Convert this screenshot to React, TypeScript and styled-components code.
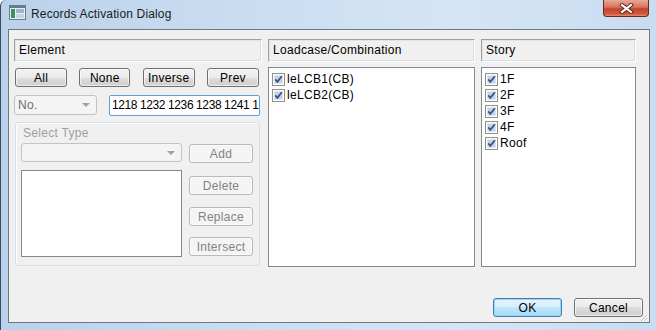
import React from 'react'
import styled, { createGlobalStyle } from 'styled-components'

const GlobalStyle = createGlobalStyle`
  html, body {
    margin: 0;
    padding: 0;
    background: #ffffff;
  }
  body {
    font-family: 'Liberation Sans', Arial, sans-serif;
    font-size: 12px;
    color: #000;
  }
`

const Window = styled.div`
  position: relative;
  width: 656px;
  height: 330px;
  box-sizing: border-box;
  border-left: 1px solid #3d4a5a;
  border-top-left-radius: 6px;
  background: linear-gradient(90deg, #b9d1ea 0%, #c7dbf0 30%, #d5e5f5 70%, #c9dcf0 100%);
  overflow: hidden;
`

const TitleBar = styled.div`
  height: 29px;
  display: flex;
  align-items: flex-start;
  padding-left: 8px;
`

const TitleIcon = styled.svg`
  margin-top: 5px;
  flex: none;
`

const Title = styled.div`
  margin-left: 5px;
  margin-top: 7px;
  font-size: 12px;
  letter-spacing: 0.15px;
  color: #1c1c1c;
  flex: 1;
`

const CloseButton = styled.div`
  width: 46px;
  height: 17px;
  margin-right: 7px;
  box-sizing: border-box;
  border: 1px solid #6b2a20;
  border-top: none;
  border-radius: 0 0 4px 4px;
  background: linear-gradient(#e8a897 0%, #d6735e 45%, #c5432c 55%, #d2563c 85%, #e48b70 100%);
  display: flex;
  align-items: center;
  justify-content: center;
`

const Client = styled.div`
  width: 642px;
  height: 294px;
  margin-left: 7px;
  box-sizing: border-box;
  border: 1px solid #6f7780;
  background: #f0f0f0;
  padding: 9px 6px 5px 5px;
  display: flex;
  flex-direction: column;
`

const Panels = styled.div`
  display: grid;
  grid-template-columns: 248px 207px 155px;
  column-gap: 6px;
  height: 228px;
`

const Column = styled.div`
  display: flex;
  flex-direction: column;
`

const Header = styled.div`
  height: 23px;
  box-sizing: border-box;
  border: 1px solid;
  border-color: #a0a0a0 #ffffff #ffffff #a0a0a0;
  box-shadow: inset 1px 1px 0 #e3e3e3, inset -1px -1px 0 #dcdcdc;
  padding-left: 4px;
  line-height: 21px;
  letter-spacing: 0.3px;
`

const List = styled.div`
  margin-top: 5px;
  height: 200px;
  box-sizing: border-box;
  border: 1px solid #828790;
  background: #fff;
  padding: 3px 0 0 3px;
`

const Item = styled.div`
  height: 16px;
  line-height: 16px;
  display: flex;
  align-items: center;
  gap: 2px;
  letter-spacing: 0.3px;
`

const ButtonRow = styled.div`
  margin-top: 6px;
  display: flex;
  justify-content: space-between;
  padding: 0 3px 0 1px;
`

const Button = styled.div<{ $w: number; $disabled?: boolean; $default?: boolean }>`
  width: ${p => p.$w}px;
  height: 19px;
  box-sizing: border-box;
  border: 1px solid ${p => (p.$disabled ? '#b5b9bc' : p.$default ? '#3c7fb1' : '#707070')};
  border-radius: 3px;
  background: ${p =>
    p.$disabled
      ? '#f4f4f4'
      : p.$default
      ? 'linear-gradient(#e5f4fc 0%, #d8eefb 50%, #bee6fd 50%, #a7d9f5 100%)'
      : 'linear-gradient(#f2f2f2 0%, #ebebeb 50%, #dddddd 50%, #cfcfcf 100%)'};
  box-shadow: ${p => (p.$default ? 'inset 0 0 0 1px #9ed4f4' : 'inset 0 0 0 1px rgba(255,255,255,0.6)')};
  color: ${p => (p.$disabled ? '#838383' : '#000')};
  display: flex;
  align-items: center;
  justify-content: center;
  line-height: 1;
  letter-spacing: 0.3px;
`

const InputRow = styled.div`
  margin-top: 8px;
  display: flex;
  align-items: flex-start;
`

const Combo = styled.div<{ $w: number; $h: number }>`
  width: ${p => p.$w}px;
  height: ${p => p.$h}px;
  box-sizing: border-box;
  border: 1px solid #c3c3c3;
  border-radius: 3px;
  background: #f4f4f4;
  color: #6d6d6d;
  display: flex;
  align-items: center;
  padding-left: 3px;
  letter-spacing: 0.3px;
`

const ComboText = styled.span`
  flex: 1;
`

const Arrow = styled.span`
  width: 0;
  height: 0;
  border-left: 4px solid transparent;
  border-right: 4px solid transparent;
  border-top: 4px solid #a0a0a0;
  margin-right: 6px;
`

const TextBox = styled.div`
  margin-left: 12px;
  width: 151px;
  height: 21px;
  box-sizing: border-box;
  border: 1px solid #5c9edf;
  border-radius: 2px;
  background: #fff;
  padding-left: 2px;
  line-height: 19px;
  letter-spacing: -0.4px;
  white-space: nowrap;
  overflow: hidden;
`

const Group = styled.div`
  margin-top: 6px;
  margin-left: 1px;
  width: 245px;
  height: 144px;
  box-sizing: border-box;
  border: 1px solid #d5dfe5;
  border-radius: 3px;
  box-shadow: inset 1px 1px 0 #fff;
  padding: 0 0 0 5px;
`

const GroupLabel = styled.div`
  height: 20px;
  line-height: 20px;
  padding-left: 2px;
  color: #a0a0a0;
  letter-spacing: 0.3px;
`

const GroupBody = styled.div`
  display: grid;
  grid-template-columns: 161px 64px;
  column-gap: 7px;
`

const Stack = styled.div`
  display: flex;
  flex-direction: column;
`

const Spacer = styled.div<{ $h: number }>`
  height: ${p => p.$h}px;
  flex: none;
`

const ListBox = styled.div`
  margin-top: 8px;
  height: 87px;
  box-sizing: border-box;
  border: 1px solid #828790;
  background: #fff;
`

const Footer = styled.div`
  margin-top: auto;
  display: flex;
  justify-content: flex-end;
  gap: 12px;
`

const Grip = styled.svg`
  position: absolute;
  right: 8px;
  bottom: 8px;
`

const Check = () => (
  <svg width="13" height="13" viewBox="0 0 13 13">
    <rect x="0.5" y="0.5" width="12" height="12" fill="#fff" stroke="#8e8f8f" />
    <rect x="2" y="2" width="9" height="9" fill="#c8d3e0" />
    <rect x="2.5" y="2.5" width="8" height="8" fill="none" stroke="#dde5ee" />
    <path d="M3.3 6.4 L5.4 8.8 L9.8 3.3" fill="none" stroke="#3b4f8e" strokeWidth="1.8" />
  </svg>
)

const loadcases = ['leLCB1(CB)', 'leLCB2(CB)']
const stories = ['1F', '2F', '3F', '4F', 'Roof']

const App: React.FC = () => {
  return (
    <>
      <GlobalStyle />
      <Window>
        <TitleBar>
          <TitleIcon width="17" height="15" viewBox="0 0 17 15">
            <rect x="0.5" y="0.5" width="16" height="14" fill="#e8eef4" stroke="#6f7a86" />
            <rect x="1" y="1" width="15" height="2" fill="#5a7ea8" />
            <rect x="2" y="4" width="4" height="9" fill="#3f8f5a" />
            <rect x="7" y="4" width="8" height="4" fill="#9fb5cc" />
            <rect x="7" y="9" width="8" height="4" fill="#c7d3df" />
          </TitleIcon>
          <Title>Records Activation Dialog</Title>
          <CloseButton>
            <svg width="15" height="11" viewBox="0 0 15 11">
              <path d="M3 2 L12 9 M12 2 L3 9" stroke="#5a2219" strokeWidth="4" strokeLinecap="square" />
              <path d="M3 2 L12 9 M12 2 L3 9" stroke="#ffffff" strokeWidth="2.2" strokeLinecap="square" />
            </svg>
          </CloseButton>
        </TitleBar>
        <Client>
          <Panels>
            <Column>
              <Header>Element</Header>
              <ButtonRow>
                <Button $w={52}>All</Button>
                <Button $w={51}>None</Button>
                <Button $w={52}>Inverse</Button>
                <Button $w={52}>Prev</Button>
              </ButtonRow>
              <InputRow>
                <Combo $w={83} $h={20}>
                  <ComboText>No.</ComboText>
                  <Arrow />
                </Combo>
                <TextBox>1218 1232 1236 1238 1241 1</TextBox>
              </InputRow>
              <Group>
                <GroupLabel>Select Type</GroupLabel>
                <GroupBody>
                  <Stack>
                    <Combo $w={161} $h={19}>
                      <ComboText />
                      <Arrow />
                    </Combo>
                    <ListBox />
                  </Stack>
                  <Stack>
                    <Spacer $h={1} />
                    <Button $w={64} $disabled>Add</Button>
                    <Spacer $h={13} />
                    <Button $w={64} $disabled>Delete</Button>
                    <Spacer $h={12} />
                    <Button $w={64} $disabled>Replace</Button>
                    <Spacer $h={11} />
                    <Button $w={64} $disabled>Intersect</Button>
                  </Stack>
                </GroupBody>
              </Group>
            </Column>
            <Column>
              <Header>Loadcase/Combination</Header>
              <List>
                {loadcases.map(name => (
                  <Item key={name}>
                    <Check />
                    {name}
                  </Item>
                ))}
              </List>
            </Column>
            <Column>
              <Header>Story</Header>
              <List>
                {stories.map(name => (
                  <Item key={name}>
                    <Check />
                    {name}
                  </Item>
                ))}
              </List>
            </Column>
          </Panels>
          <Footer>
            <Button $w={69} $default>OK</Button>
            <Button $w={69}>Cancel</Button>
          </Footer>
        </Client>
        <Grip width="9" height="9" viewBox="0 0 9 9">
          <path d="M8 2 L2 8 M8 5 L5 8" stroke="#b8b8b8" strokeWidth="1" />
          <path d="M8.5 3 L3 8.5 M8.5 6 L6 8.5" stroke="#ffffff" strokeWidth="1" />
        </Grip>
      </Window>
    </>
  )
}

export default App
